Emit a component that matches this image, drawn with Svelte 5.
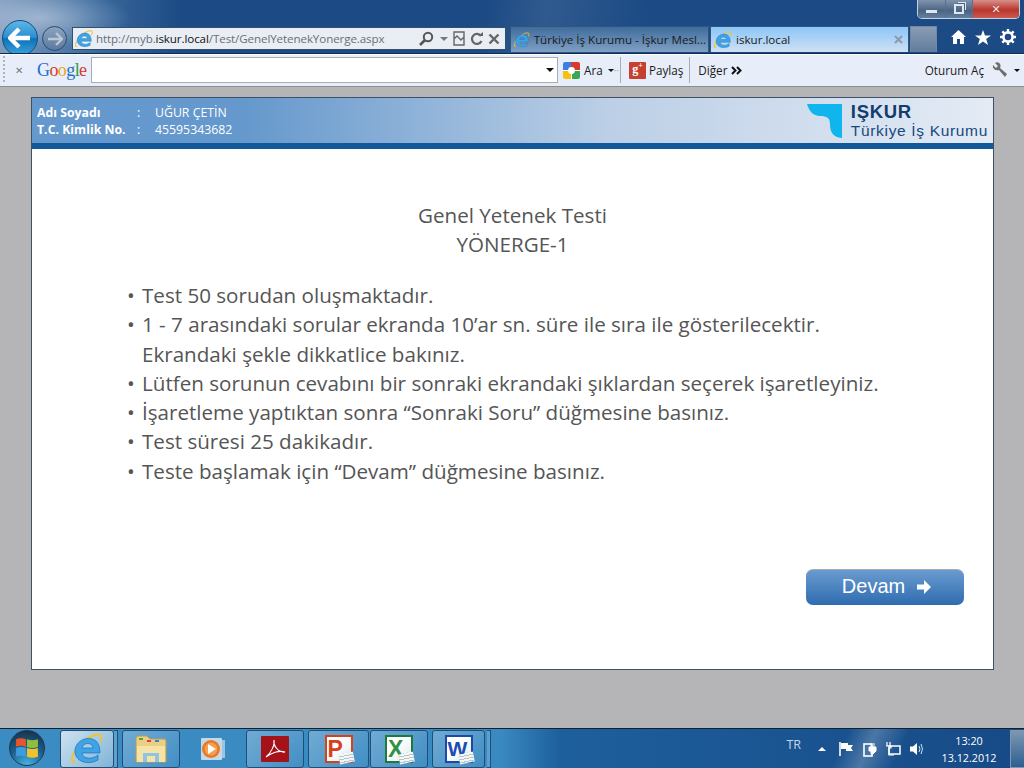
<script lang="ts">
  const bullets = [
    ["Test 50 sorudan oluşmaktadır."],
    ["1 - 7 arasındaki sorular ekranda 10’ar sn. süre ile sıra ile gösterilecektir.", "Ekrandaki şekle dikkatlice bakınız."],
    ["Lütfen sorunun cevabını bir sonraki ekrandaki şıklardan seçerek işaretleyiniz."],
    ["İşaretleme yaptıktan sonra “Sonraki Soru” düğmesine basınız."],
    ["Test süresi 25 dakikadır."],
    ["Teste başlamak için “Devam” düğmesine basınız."]
  ];
</script>

{#snippet ie(size)}
  <svg width={size} height={size} viewBox="0 0 32 32" fill="none">
    <path d="M4 28C0 32 0 26 3 20C8 10 18 3 26 1.500C31 1 32 4 29 9" stroke="#f2c230" stroke-width="1.800"/>
    <path fill-rule="evenodd" d="M4 17C5 7 18 2 25 8C28 11 29 15 29 20H11C12 26 21 27 27 22V27C16 33 3 28 4 17ZM11 15H22C22 9 12 9 11 15Z" fill="#3fa4e6" stroke="#1a6fb8" stroke-width=".7"/>
  </svg>
{/snippet}

<div class="page">
  <header class="chrome">
    <div class="titlebar">
      <div class="winbtns">
        <span class="wb min"><i></i></span>
        <span class="wb max"><i></i></span>
        <span class="wb close">✕</span>
      </div>
    </div>
    <div class="navrow">
      <span class="back">
        <svg width="24" height="22" viewBox="0 0 24 22"><path d="M11 2L2 11L11 20M3 11H22" fill="none" stroke="#fff" stroke-width="4.4"/></svg>
      </span>
      <span class="forward">
        <svg width="16" height="14" viewBox="0 0 16 14"><path d="M9 1L15 7L9 13M14 7H1" fill="none" stroke="#b9c6d6" stroke-width="2.4"/></svg>
      </span>
      <div class="address">
        {@render ie(18)}
        <span class="url">http://myb.<b>iskur.local</b>/Test/GenelYetenekYonerge.aspx</span>
        <div class="addr-tools">
          <svg width="17" height="16" viewBox="0 0 17 16"><circle cx="10" cy="6" r="4.2" fill="none" stroke="#555" stroke-width="2"/><path d="M7 9L2 14" stroke="#555" stroke-width="2.6"/></svg>
          <span class="caret gray"></span>
          <svg width="12" height="15" viewBox="0 0 12 15"><path d="M1 1H11V14H1ZM1 8L4 5L8 9L11 6" fill="none" stroke="#666" stroke-width="1.4"/></svg>
          <svg width="13" height="14" viewBox="0 0 13 14"><path d="M11 4A5 5 0 1 0 11.5 9" fill="none" stroke="#666" stroke-width="2.2"/><path d="M8 4H13V0Z" fill="#666"/></svg>
          <svg width="12" height="12" viewBox="0 0 12 12"><path d="M1.5 1.5L10.5 10.5M10.5 1.5L1.5 10.5" stroke="#666" stroke-width="2.4"/></svg>
        </div>
      </div>
      <div class="tab">
        {@render ie(18)}
        <span>Türkiye İş Kurumu - İşkur Mesl...</span>
      </div>
      <div class="tab active">
        {@render ie(18)}
        <span>iskur.local</span>
        <svg class="tabx" width="9" height="9" viewBox="0 0 9 9"><path d="M1 1L8 8M8 1L1 8" stroke="#8d99a8" stroke-width="2"/></svg>
      </div>
      <div class="newtab"></div>
      <div class="toolicons">
        <svg width="15" height="14" viewBox="0 0 15 14"><path d="M7.5 0L15 7H13V14H9V9H6V14H2V7H0Z" fill="#fff"/></svg>
        <svg width="16" height="15" viewBox="0 0 16 15"><path d="M8 0L10 5.4H16L11.2 9L13 15L8 11.4L3 15L4.8 9L0 5.4H6Z" fill="#fff"/></svg>
        <svg width="16" height="16" viewBox="0 0 16 16"><circle cx="8" cy="8" r="4.6" fill="none" stroke="#fff" stroke-width="2.6"/><path d="M8 0V3M8 13V16M0 8H3M13 8H16M2.3 2.3L4.4 4.4M11.6 11.6L13.7 13.7M13.7 2.3L11.6 4.4M4.4 11.6L2.3 13.7" stroke="#fff" stroke-width="2.4"/></svg>
      </div>
    </div>
    <div class="cmdbar">
      <span class="grip"></span>
      <span class="cmd-x">✕</span>
      <span class="google"><i class="b">G</i><i class="r">o</i><i class="y">o</i><i class="b">g</i><i class="g">l</i><i class="r">e</i></span>
      <div class="search"><span class="caret"></span></div>
      <svg class="gicon" width="17" height="17" viewBox="0 0 17 17"><rect width="17" height="17" rx="2" fill="#fff"/><path d="M0 2Q0 0 2 0H8V8H0Z" fill="#3d7ee0"/><path d="M8 0H15Q17 0 17 2V8H8Z" fill="#d83a2c"/><path d="M0 9H8V17H2Q0 17 0 15Z" fill="#f4c20d"/><path d="M9 9H17V15Q17 17 15 17H9Z" fill="#3aa757"/><circle cx="8.5" cy="8.5" r="3.4" fill="#fff"/></svg>
      <span class="cmd-text ara">Ara</span>
      <span class="caret small"></span>
      <span class="dots">··</span>
      <span class="sep"></span>
      <span class="gplus">g<sup>+</sup></span>
      <span class="cmd-text">Paylaş</span>
      <span class="sep two"></span>
      <span class="cmd-text">Diğer</span>
      <svg class="chev" width="11" height="9" viewBox="0 0 11 9"><path d="M1 1L4.500 4.500L1 8M6 1L9.500 4.500L6 8" fill="none" stroke="#111" stroke-width="2"/></svg>
      <span class="spacer"></span>
      <span class="cmd-text">Oturum Aç</span>
      <svg class="wrench" width="16" height="16" viewBox="0 0 16 16"><path d="M1 3L4 6L6 4L3 1C6 -1 10 2 8 6L15 12L13 15L7 8C4 9 0 7 1 3Z" fill="#6d6d6d"/></svg>
      <span class="caret small last"></span>
    </div>
  </header>

  <main class="content">
    <section class="card">
      <div class="userbar">
        <div class="user">
          <div class="user-row"><b>Adı Soyadı</b><span class="colon">:</span><span>UĞUR ÇETİN</span></div>
          <div class="user-row"><b>T.C. Kimlik No.</b><span class="colon">:</span><span>45595343682</span></div>
        </div>
        <div class="logo">
          <svg width="35" height="34" viewBox="0 0 35 34"><path d="M0 0H35V34C25 33 23 27 23 20C23 14 20 12 13 12C6 12 2 7 0 0Z" fill="#10b5ee"/></svg>
          <div class="logo-text">
            <strong>IŞKUR</strong>
            <span>Türkiye İş Kurumu</span>
          </div>
        </div>
      </div>
      <div class="body">
        <h1>Genel Yetenek Testi<br />YÖNERGE-1</h1>
        <ul>
          {#each bullets as lines}
            <li>
              {#each lines as line}
                <div>{line}</div>
              {/each}
            </li>
          {/each}
        </ul>
        <div class="actions">
          <button class="devam">
            Devam
            <svg width="14" height="14" viewBox="0 0 14 14"><path d="M0 4.500H7V0L14 7L7 14V9.500H0Z" fill="#fff"/></svg>
          </button>
        </div>
      </div>
    </section>
  </main>

  <footer class="taskbar">
    <span class="orb">
      <svg width="24" height="24" viewBox="0 0 22 22"><path d="M1 3Q5 1 10 3V10Q5 8 1 10Z" fill="#e8542c"/><path d="M11 3Q16 5 21 3V10Q16 12 11 10Z" fill="#8fbf3c"/><path d="M1 11Q5 9 10 11V19Q5 17 1 19Z" fill="#3d9be0"/><path d="M11 11Q16 13 21 11V19Q16 21 11 19Z" fill="#f2c12e"/></svg>
    </span>
    <span class="tb active">{@render ie(32)}</span>
    <span class="tb-stub"></span>
    <span class="tb">
      <svg width="32" height="30" viewBox="0 0 32 30"><path d="M1 5Q1 2 3 2H12L15 5H29Q31 5 31 7V28H1Z" fill="#eccf84" stroke="#b99c55"/><rect x="4" y="4" width="4" height="2" fill="#3fae49"/><rect x="12" y="6" width="4" height="2" fill="#d8433a"/><rect x="20" y="6" width="4" height="2" fill="#3e7fd6"/><path d="M2 12H30V28H2Z" fill="#f6e3a6"/><path d="M8 19H24V28H20V22H12V28H8Z" fill="#8fc4e4"/></svg>
    </span>
    <span class="tb plain">
      <svg width="26" height="28" viewBox="0 0 26 28"><path d="M21 5H25V23H21Z" fill="#9cc4de"/><rect x="1" y="3" width="21" height="22" rx="1" fill="#c4d9e8"/><circle cx="11" cy="14" r="9" fill="#e8792a"/><circle cx="11" cy="14" r="6.400" fill="#f6a04c"/><path d="M8 9L16 14L8 19Z" fill="#fff"/></svg>
    </span>
    <span class="tb">
      <svg width="30" height="28" viewBox="0 0 30 28"><rect x="1" y="1" width="28" height="26" rx="1" fill="#a4121a"/><path d="M6 22C11 18 15 10 14 5C13 10 18 18 25 17C19 15 11 18 6 22Z" fill="none" stroke="#fff" stroke-width="1.100"/></svg>
    </span>
    <span class="tb ppt-btn">
      <span class="doc ppt"><b>P</b></span>
    </span>
    <span class="tb">
      <span class="doc xls"><b>X</b></span>
    </span>
    <span class="tb word-btn">
      <span class="doc doc-w"><b>W</b></span>
    </span>
    <span class="tb-stub"></span>
    <span class="spacer"></span>
    <div class="tray">
      <span class="lang">TR</span>
      <span class="up"></span>
      <svg width="15" height="14" viewBox="0 0 15 14"><path d="M1 0V14" stroke="#fff" stroke-width="1.600"/><path d="M2 1H9V3H14L12 6L14 9H7V7H2Z" fill="#fff"/></svg>
      <svg width="14" height="15" viewBox="0 0 14 15"><rect x="1" y="2" width="8" height="12" fill="none" stroke="#fff" stroke-width="1.600"/><path d="M6 5H13V9L10 12H8V9H6ZM8 1V5M11 1V5" fill="#fff" stroke="#fff"/></svg>
      <svg width="15" height="14" viewBox="0 0 15 14"><rect x="3" y="4" width="11" height="8" fill="none" stroke="#fff" stroke-width="1.500"/><path d="M1 0V4M4 0V4M0 4H5V6H3V13H8" stroke="#fff" fill="none" stroke-width="1.200"/></svg>
      <svg width="14" height="14" viewBox="0 0 14 14"><path d="M0 4.500H3L7 1V13L3 9.500H0Z" fill="#fff"/><path d="M9 4Q11 7 9 10M11 2Q14 7 11 12" fill="none" stroke="#cfe0ee" stroke-width="1"/></svg>
      <div class="clock"><span>13:20</span><span>13.12.2012</span></div>
      <span class="showdesk"></span>
    </div>
  </footer>
</div>

<style>
  :global(body) {
    margin: 0;
    overflow: hidden;
  }

  .page {
    width: 1024px;
    height: 768px;
    display: flex;
    flex-direction: column;
    font-family: "Open Sans", "Noto Sans", sans-serif;
    background: #b5b5b8;
  }

  /* browser chrome */
  .chrome {
    height: 87px;
    flex: none;
    display: flex;
    flex-direction: column;
    background:
      radial-gradient(ellipse 90px 30px at 40px 18px, rgba(190, 205, 225, 0.65), transparent),
      linear-gradient(100deg, transparent 0 480px, rgba(255, 255, 255, 0.09) 540px, transparent 640px),
      linear-gradient(90deg, #7f9cbe 0, #3e6c9e 90px, #1c4a84 180px, #1b4a84 1024px);
  }

  .titlebar {
    height: 26px;
    display: flex;
    justify-content: flex-end;
    padding-right: 4px;
  }

  .winbtns {
    display: flex;
    height: 18px;
    border: 1px solid #c8d2de;
    border-top: none;
    border-radius: 0 0 5px 5px;
    overflow: hidden;
  }

  .wb {
    height: 18px;
    display: flex;
    align-items: center;
    justify-content: center;
    border-right: 1px solid #5a6f88;
    background: linear-gradient(#7f93ad, #4a6383 60%, #65809f);
  }

  .wb.min { width: 27px; }
  .wb.max { width: 26px; }

  .wb.min i {
    width: 11px;
    height: 3px;
    margin-top: 4px;
    background: #dfe6ee;
  }

  .wb.max i {
    width: 6px;
    height: 6px;
    border: 2px solid #dfe6ee;
    box-shadow: 2px -2px 0 -1px #4a6383, 3px -3px 0 -1px #dfe6ee;
  }

  .wb.close {
    width: 46px;
    border: none;
    color: #f2e6e4;
    font: bold 11px "DejaVu Sans", sans-serif;
    background: linear-gradient(#d8908a, #b8362c 55%, #cc5a50);
  }

  .navrow {
    height: 27px;
    display: flex;
    align-items: flex-start;
    position: relative;
    padding-left: 72px;
    border-bottom: 1px solid #0f2c50;
  }

  .back {
    position: absolute;
    left: 2px;
    top: -6px;
    width: 36px;
    height: 36px;
    box-sizing: border-box;
    border-radius: 50%;
    border: 1px solid #134c7c;
    background: linear-gradient(#5fb5e8, #2b8fd0 48%, #0b73b8 52%, #3aa2dc);
    display: flex;
    align-items: center;
    justify-content: center;
    z-index: 1;
    clip-path: inset(0 0 3px 0);
  }

  .forward {
    position: absolute;
    left: 42px;
    top: 0;
    width: 25px;
    height: 25px;
    box-sizing: border-box;
    border-radius: 50%;
    border: 1px solid #2f4a6c;
    background: linear-gradient(#8ba3bf, #5b7a9e);
    display: flex;
    align-items: center;
    justify-content: center;
  }

  .address {
    width: 434px;
    height: 23px;
    box-sizing: border-box;
    margin-top: 1px;
    padding: 0 5px 0 2px;
    background: #e9eef5;
    border: 1px solid #32506f;
    display: flex;
    align-items: center;
    gap: 3px;
    flex: none;
  }

  .url {
    font-size: 11.6px;
    color: #6a6f76;
    white-space: nowrap;
    letter-spacing: -0.1px;
  }

  .url b {
    font-weight: 400;
    color: #111;
  }

  .addr-tools {
    margin-left: auto;
    display: flex;
    align-items: center;
    gap: 5px;
  }

  .tab {
    width: 199px;
    height: 26px;
    flex: none;
    box-sizing: border-box;
    margin-left: 4px;
    padding: 0 2px 0 3px;
    display: flex;
    align-items: center;
    gap: 4px;
    font-size: 11.6px;
    color: #1a1a1a;
    white-space: nowrap;
    overflow: hidden;
    background: linear-gradient(#3f6c9c, #7fa0c4);
    border: 1px solid #33557c;
    border-bottom: none;
  }

  .tab.active {
    margin-left: 1px;
    background: linear-gradient(#8cc6f8, #cfe0f3);
    position: relative;
  }

  .tabx {
    margin-left: auto;
    margin-right: 3px;
  }

  .newtab {
    width: 27px;
    height: 26px;
    flex: none;
    margin-left: 1px;
    box-sizing: border-box;
    border: 1px solid #6f88a4;
    border-bottom: none;
    background: linear-gradient(#8b9db3, #5f7c9c);
  }

  .toolicons {
    display: flex;
    gap: 9px;
    align-items: center;
    height: 22px;
    margin-left: 14px;
  }

  .cmdbar {
    height: 33px;
    box-sizing: border-box;
    padding-bottom: 1px;
    display: flex;
    align-items: center;
    background: #e7eef9;
    border-top: 1px solid #fff;
    border-bottom: 1px solid #8a8d92;
  }

  .grip {
    width: 2px;
    height: 28px;
    margin-left: 3px;
    background: repeating-linear-gradient(#aeb6c0 0 2px, transparent 2px 4px);
  }

  .cmd-x {
    width: 10px;
    margin-left: 10px;
    font: bold 10px "DejaVu Sans", sans-serif;
    color: #777;
  }

  .google {
    margin-left: 12px;
    font: 18px "Liberation Serif", serif;
    letter-spacing: -0.6px;
    width: 54px;
  }

  .google i { font-style: normal; }
  .google .b { color: #1f6fc8; }
  .google .r { color: #d93a2b; }
  .google .y { color: #e9a80c; }
  .google .g { color: #2f9e44; }

  .search {
    width: 467px;
    height: 26px;
    flex: none;
    box-sizing: border-box;
    background: #fff;
    border: 1px solid #a8acb3;
    display: flex;
    align-items: center;
    justify-content: flex-end;
    padding-right: 3px;
  }

  .caret {
    width: 0;
    height: 0;
    border-left: 4px solid transparent;
    border-right: 4px solid transparent;
    border-top: 4px solid #111;
  }

  .caret.gray {
    border-top-color: #777;
  }

  .caret.small {
    margin-left: 5px;
    border-left-width: 3px;
    border-right-width: 3px;
    border-top-width: 3px;
  }

  .gicon { margin-left: 5px; }

  .cmd-text {
    font-size: 11.7px;
    color: #1a1a1a;
    white-space: nowrap;
  }

  .ara { margin-left: 4px; }

  .chev { margin-left: 4px; }

  .dots {
    font-size: 10px;
    color: #9aa;
  }

  .sep {
    width: 1px;
    height: 26px;
    background: #a9aeb5;
    margin: 0 8px 0 1px;
  }

  .sep.two { margin: 0 8px 0 6px; }

  .gplus {
    width: 17px;
    height: 17px;
    flex: none;
    margin-right: 3px;
    background: #c6402f;
    color: #fff;
    font: bold 12px/15px "Liberation Serif", serif;
    text-align: center;
    border-radius: 1px;
  }

  .gplus sup {
    font-size: 8px;
    line-height: 0;
  }

  .spacer { flex: 1; }

  .wrench { margin-left: 8px; }
  .caret.last { margin: 0 4px 0 6px; }

  /* page */
  .content {
    flex: 1;
    padding: 10px 30px 0 31px;
    min-height: 0;
  }

  .card {
    height: 573px;
    box-sizing: border-box;
    border: 1px solid #3c5168;
    background: #fff;
    display: flex;
    flex-direction: column;
  }

  .userbar {
    height: 51px;
    flex: none;
    box-sizing: border-box;
    padding: 6px 5px 0 5px;
    display: flex;
    justify-content: space-between;
    background: linear-gradient(90deg, #6598cc 0, #6598cc 22%, #bccfe6 60%, #e4ebf5 100%);
    border-bottom: 6px solid #14589c;
  }

  .user {
    font-size: 12.3px;
    line-height: 17px;
    color: #fff;
  }

  .user-row {
    display: flex;
  }

  .user-row b {
    width: 100px;
    font-weight: 700;
  }

  .colon {
    width: 18px;
  }

  .logo {
    display: flex;
    gap: 9px;
  }

  .logo-text {
    display: flex;
    flex-direction: column;
    color: #164a7e;
    font-family: "Liberation Sans", sans-serif;
  }

  .logo-text strong {
    font-size: 18.5px;
    line-height: 16px;
    letter-spacing: 0.7px;
    color: #123d6f;
  }

  .logo-text span {
    font-size: 15.5px;
    line-height: 22px;
    letter-spacing: 0.67px;
    white-space: nowrap;
  }

  .body {
    flex: 1;
    display: flex;
    flex-direction: column;
    min-height: 0;
  }

  h1 {
    margin: 52px 0 0;
    font-size: 20.6px;
    line-height: 29px;
    font-weight: 400;
    color: #555;
    text-align: center;
  }

  ul {
    list-style: none;
    margin: 22px 0 0;
    padding: 0 0 0 95px;
    font-size: 20.6px;
    line-height: 29.3px;
    color: #555;
  }

  li {
    position: relative;
    padding-left: 15px;
    white-space: nowrap;
  }

  li::before {
    content: "•";
    position: absolute;
    left: 0;
  }

  .actions {
    display: flex;
    justify-content: flex-end;
    padding: 83px 29px 0 0;
  }

  .devam {
    width: 158px;
    height: 36px;
    display: flex;
    align-items: center;
    justify-content: center;
    gap: 12px;
    border: none;
    border-top: 1px solid #aaa;
    border-radius: 7px;
    padding: 0 0 2px 3px;
    color: #fff;
    font: 20px "Liberation Sans", sans-serif;
    background: linear-gradient(#6a9bcf, #2f6cb0);
  }

  /* taskbar */
  .taskbar {
    height: 40px;
    flex: none;
    box-sizing: border-box;
    padding: 1px 0 0 60px;
    display: flex;
    position: relative;
    background:
      linear-gradient(115deg, transparent 0 770px, rgba(255, 255, 255, 0.22) 795px, transparent 825px),
      linear-gradient(90deg, #3c8cc4 0, #3a8ac2 500px, #1d5f9c 560px, #174a86 1024px);
    border-top: 1px solid #10212f;
  }

  .orb {
    position: absolute;
    left: 9px;
    top: 1px;
    width: 36px;
    height: 36px;
    box-sizing: border-box;
    border-radius: 50%;
    border: 1px solid #20384e;
    background: radial-gradient(circle at 50% 100%, #45b6e6, #1d5f8c 50%, #16293c);
    display: flex;
    align-items: center;
    justify-content: center;
  }

  .tb {
    width: 58px;
    height: 38px;
    flex: none;
    box-sizing: border-box;
    margin-right: 4px;
    display: flex;
    align-items: center;
    justify-content: center;
    border: 1px solid #1f4f78;
    border-radius: 3px;
    background: linear-gradient(135deg, rgba(255, 255, 255, 0.28), rgba(255, 255, 255, 0.03));
  }

  .tb.active {
    width: 54px;
    margin-right: 0;
    background: linear-gradient(135deg, rgba(255, 255, 255, 0.75), rgba(255, 255, 255, 0.35));
  }

  .tb.ppt-btn {
    width: 61px;
    margin-right: 1px;
  }

  .tb.word-btn {
    width: 53px;
    margin-right: 2px;
  }

  .tb-stub {
    width: 4px;
    height: 38px;
    flex: none;
    margin-right: 4px;
    box-sizing: border-box;
    border: 1px solid #1f4f78;
    border-left: none;
    background: rgba(255, 255, 255, 0.18);
  }

  .tb.plain {
    border: none;
    background: none;
  }

  .doc {
    width: 28px;
    height: 28px;
    box-sizing: border-box;
    position: relative;
    background: linear-gradient(135deg, #fff 40%, #dfe8e8);
    font: bold 23px/24px "Liberation Sans", sans-serif;
    padding-left: 1px;
  }

  /* the little page that sticks out of the office icons */
  .doc::after {
    content: "";
    position: absolute;
    right: -3px;
    bottom: -2px;
    width: 15px;
    height: 10px;
    background: repeating-linear-gradient(#f4f6f6 0 2px, #b6c6cc 2px 3px);
    transform: rotate(-12deg);
  }

  .doc b { font-weight: 700; }
  .doc.ppt { border: 2px solid #d8401c; color: #d8401c; }
  .doc.xls { border: 2px solid #1c7a3c; color: #2f9046; }
  .doc.doc-w { border: 2px solid #1c48a8; color: #1c4cb4; font-size: 21px; }

  .tray {
    display: flex;
    align-items: center;
    gap: 9px;
    height: 38px;
    color: #fff;
  }

  .lang {
    font-size: 12.5px;
    color: #c6d6e6;
    margin: -10px 8px 0 0;
  }

  .up {
    width: 0;
    height: 0;
    margin-right: 4px;
    border-left: 4px solid transparent;
    border-right: 4px solid transparent;
    border-bottom: 4px solid #fff;
  }

  .clock {
    width: 62px;
    margin: 0 6px 0 5px;
    display: flex;
    flex-direction: column;
    align-items: center;
    font-size: 10.8px;
    line-height: 17px;
    white-space: nowrap;
  }

  .showdesk {
    width: 14px;
    height: 38px;
    flex: none;
    margin-left: -5px;
    box-sizing: border-box;
    border: 1px solid #7d97b0;
    border-right: none;
    background: linear-gradient(#7d97b0, #2d5f92);
  }
</style>
